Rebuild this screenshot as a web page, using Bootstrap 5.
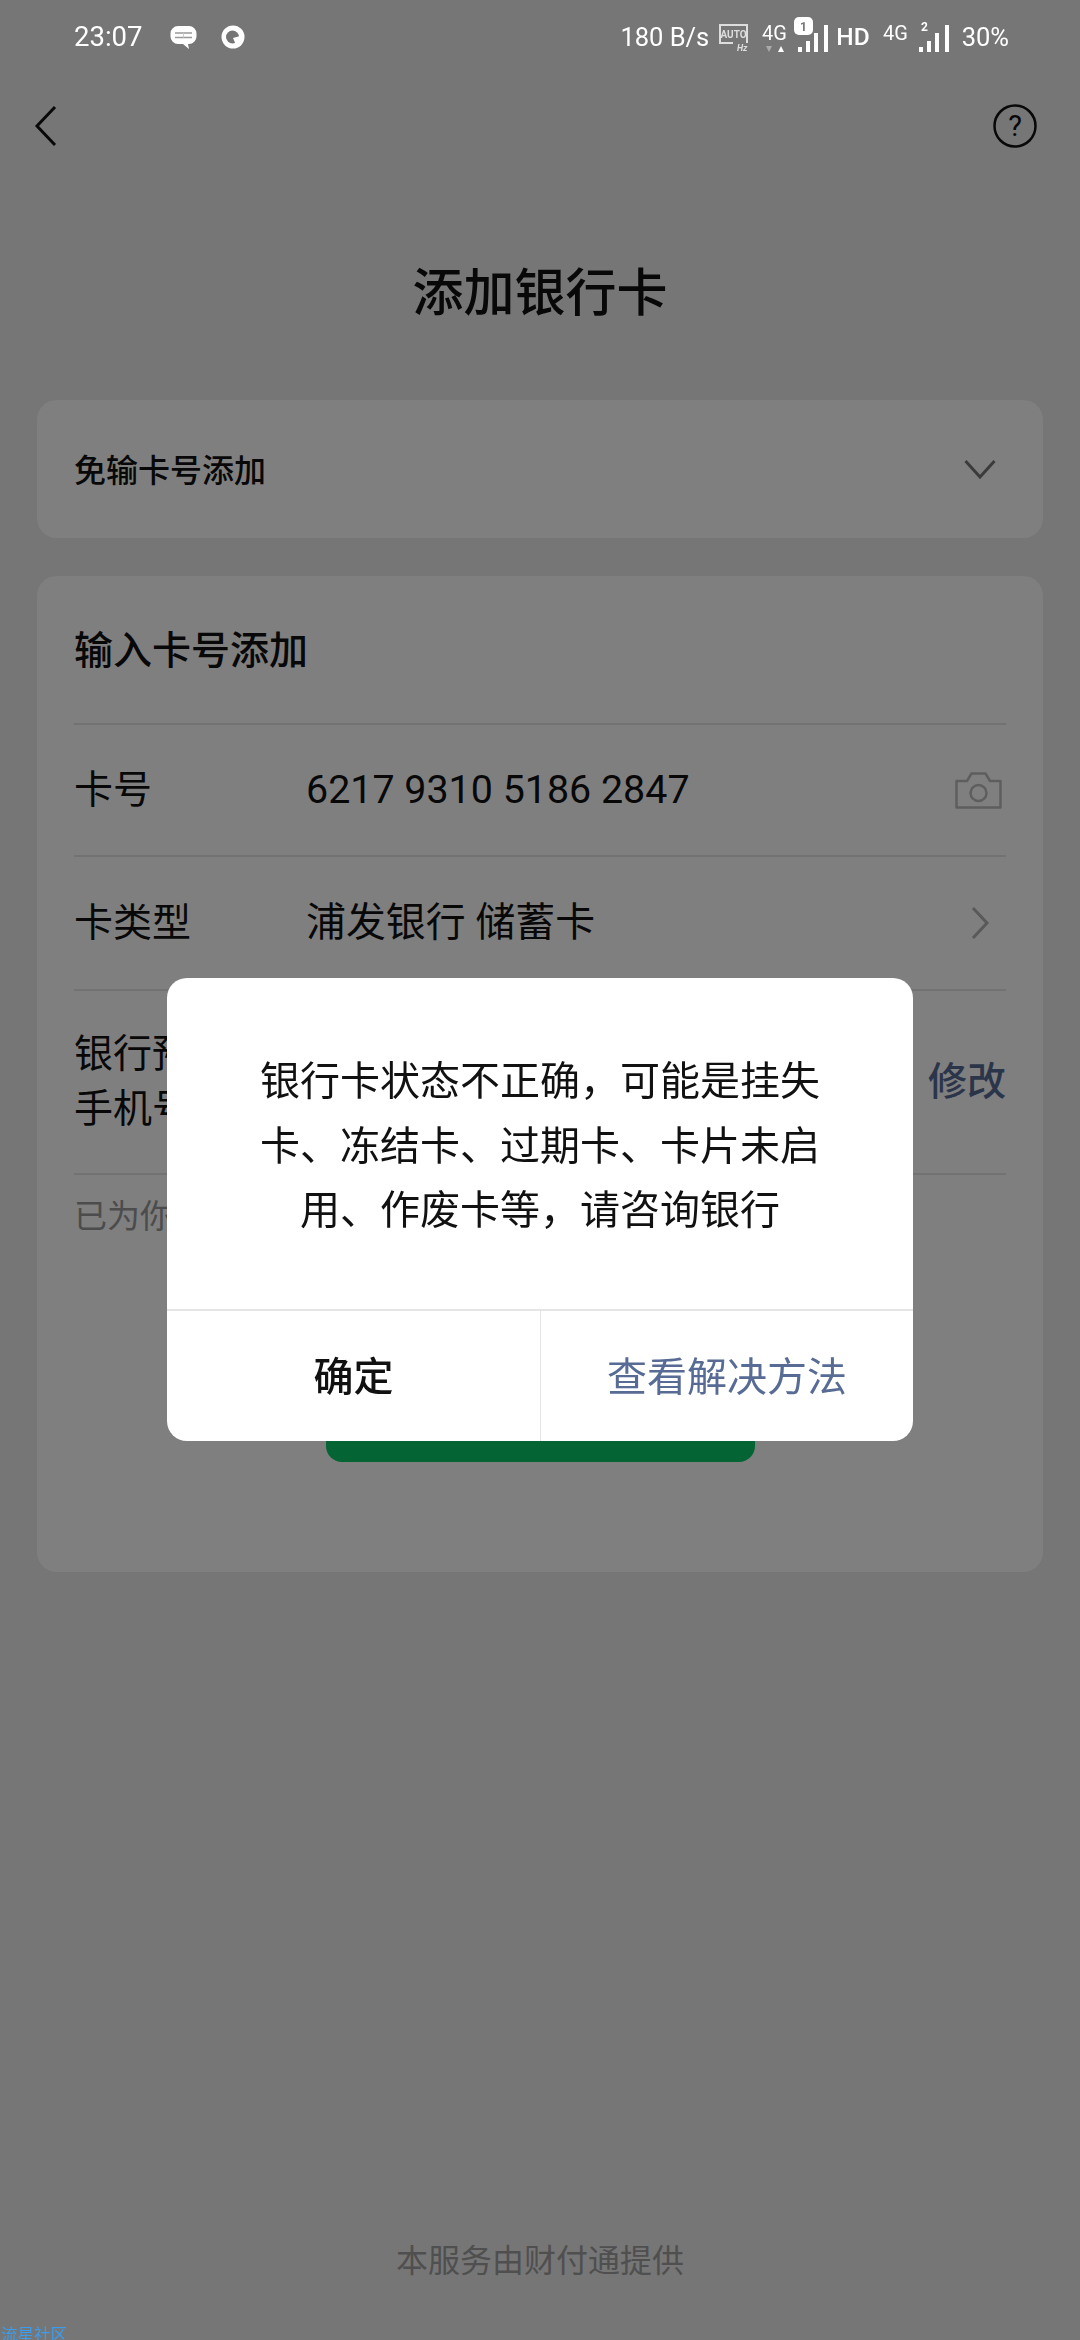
<!DOCTYPE html>
<html lang="zh-CN">

<head>
    <meta charset="UTF-8">
    <meta name="viewport" content="width=device-width, initial-scale=1.0">
    <title>添加银行卡</title>
    <link href="https://cdn.jsdelivr.net/npm/bootstrap@5.3.0/dist/css/bootstrap.min.css" rel="stylesheet">
    <style>
        html, body { height: 100%; overflow: hidden; }
        body { background: #ededed; color: #111; font-family: "Roboto", "Noto Sans CJK SC", sans-serif; }

        /* status bar sits above the dim layer */
        .status-bar { position: relative; z-index: 1060; height: 74px; padding: 0 71px 0 74px; color: #fff; font-size: 25.5px; line-height: 74px; }
        .status-time { font-size: 27.5px; }
        .status-hd { margin-left: 8px; font-size: 24.5px; font-weight: 500; }
        .status-bar svg { display: block; flex: none; }
        .sb-bubble { margin-left: 28px; }
        .sb-round { margin-left: 24px; }
        .sb-auto { margin-left: 10px; }
        .sb-sim1 { margin-left: 14px; }
        .sb-sim2 { margin-left: 13px; }
        .sb-batt { margin-left: 13px; }

        .top-nav { height: 74px; margin-top: 15px; padding: 0 43px 0 34px; }
        .page-title { margin: 91px 0 0; height: 80px; font-size: 51px; font-weight: 500; line-height: 80px; text-align: center; }

        .sheet { margin: 0 37px; background: #fff; border-radius: 20px; }
        .sheet-quick { margin-top: 66px; height: 138px; padding: 0 47px 0 37px; font-size: 32px; font-weight: 500; }
        .quick-label { padding-top: 4px; }
        .sheet-form { margin-top: 38px; height: 996px; padding: 0 37px; }
        .form-head { height: 147px; padding-top: 4px; font-size: 39px; font-weight: 500; }
        .form-line { border-top: 2px solid #e4e4e4; font-size: 39px; }
        .line-card { height: 132px; }
        .line-type { height: 134px; }
        .line-phone { height: 184px; }
        .line-label { width: 232px; flex: none; }
        .phone-label { line-height: 55px; }
        .line-value { font-size: 39.4px; }
        .type-value { font-size: 39.9px; }
        .line-link { color: #576b95; font-weight: 500; }
        .form-hint { height: 76px; padding-top: 17px; font-size: 33px; color: #999; }
        .btn-wx { display: block; width: 429px; height: 96px; margin: 117px auto 0; background: #09c967; border-radius: 16px; }

        .footer-note { margin-top: 666px; font-size: 32px; color: #9e9e9e; text-align: center; line-height: 46px; }

        .dialog-wrap { position: fixed; z-index: 1055; top: 0; left: 0; width: 100%; padding-top: 978px; }
        .wx-dialog { width: 746px; height: 463px; margin: 0 auto; background: #fff; border-radius: 20px; overflow: hidden; }
        .dialog-text { height: 331px; padding: 72px 90px 0; font-size: 40px; line-height: 64.5px; text-align: center; color: #111; }
        .dialog-actions { height: 132px; border-top: 2px solid #e5e5e5; font-size: 40px; line-height: 133px; text-align: center; }
        .dialog-actions > div { width: 50%; }
        .action-ok { font-weight: 500; color: #111; }
        .action-more { color: #576b95; border-left: 1px solid #e5e5e5; }

        .watermark { position: fixed; z-index: 1060; left: 1px; bottom: -7px; font-size: 16.5px; line-height: 23px; color: #3d9cec; }
    </style>
</head>

<body>
    <!-- 状态栏 -->
    <div class="status-bar d-flex align-items-center">
        <span class="status-time">23:07</span>
        <svg class="sb-bubble" width="27" height="25" viewBox="0 0 27 25">
            <path d="M8 1h11a7.500 7.500 0 0 1 7.500 7.500v3a7.500 7.500 0 0 1-7.500 7.500h-1l1 5-6-5H8a7.500 7.500 0 0 1-7.500-7.500v-3A7.500 7.500 0 0 1 8 1z" fill="#fff"/>
            <path d="M5 8h17M5 12.500h17" stroke="#999" stroke-width="1.500"/>
            <path d="M13.500 8v4.500" stroke="#ccc" stroke-width="1"/>
        </svg>
        <svg class="sb-round" width="24" height="24" viewBox="0 0 24 24">
            <circle cx="12" cy="12" r="11.500" fill="#fff"/>
            <circle cx="11.500" cy="12" r="6.500" fill="#757575"/>
            <path d="M12 13l7-2 1 6-5 3z" fill="#fff"/>
        </svg>
        <span class="ms-auto">180 B/s</span>
        <svg class="sb-auto" width="29" height="27" viewBox="0 0 29 27">
            <path d="M14 19H1V1h27v18" fill="none" stroke="#ddd" stroke-width="2"/>
            <text x="14.500" y="14" font-size="10" font-weight="700" fill="#ddd" text-anchor="middle" font-family="Roboto">AUTO</text>
            <text x="28.500" y="27" font-size="9" font-weight="700" font-style="italic" fill="#ddd" text-anchor="end" font-family="Roboto">Hz</text>
        </svg>
        <svg class="sb-sim1" width="66" height="40" viewBox="0 0 66 40">
            <text x="0" y="23" font-size="20" fill="#fff" font-family="Roboto">4G</text>
            <path d="M4 29h6l-3 6z" fill="#aaa"/>
            <path d="M16 35h6l-3-6z" fill="#fff"/>
            <rect x="32" y="0" width="19" height="18" rx="5" fill="#fff"/>
            <text x="41.500" y="14" font-size="12" font-weight="700" fill="#757575" text-anchor="middle" font-family="Roboto">1</text>
            <path d="M36 30h4v5h-4zM44 24h4v11h-4zM52 16h4v19h-4zM62 8h4v27h-4z" fill="#fff"/>
        </svg>
        <span class="status-hd">HD</span>
        <svg class="sb-sim2" width="66" height="40" viewBox="0 0 66 40">
            <text x="0" y="23" font-size="20" fill="#fff" font-family="Roboto">4G</text>
            <text x="38" y="14" font-size="12" font-weight="700" fill="#fff" font-family="Roboto">2</text>
            <path d="M36 30h4v5h-4zM44 24h4v11h-4zM52 16h4v19h-4zM62 8h4v27h-4z" fill="#fff"/>
        </svg>
        <span class="sb-batt">30%</span>
    </div>

    <!-- 导航 -->
    <div class="top-nav d-flex align-items-center justify-content-between">
        <svg width="24" height="42" viewBox="0 0 24 42">
            <path d="M21 2 3 21l18 19" fill="none" stroke="#111" stroke-width="3"/>
        </svg>
        <svg width="44" height="44" viewBox="0 0 44 44">
            <circle cx="22" cy="22" r="20.500" fill="none" stroke="#111" stroke-width="2.500"/>
            <text x="22" y="32" font-size="29" fill="#111" text-anchor="middle" font-family="Roboto">?</text>
        </svg>
    </div>

    <h1 class="page-title">添加银行卡</h1>

    <div class="sheet sheet-quick d-flex align-items-center justify-content-between">
        <span class="quick-label">免输卡号添加</span>
        <svg width="32" height="20" viewBox="0 0 32 20">
            <path d="M1.500 2l14.500 16L30.500 2" fill="none" stroke="#777" stroke-width="3"/>
        </svg>
    </div>

    <div class="sheet sheet-form">
        <div class="form-head d-flex align-items-center">输入卡号添加</div>
        <div class="form-line line-card d-flex align-items-center">
            <span class="line-label">卡号</span>
            <span class="line-value flex-grow-1">6217 9310 5186 2847</span>
            <svg class="me-1" width="47" height="37" viewBox="0 0 47 37">
                <path d="M1.500 9H12l4.500-7.500h14L35 9h10.500v26.500h-44z" fill="none" stroke="#bcbcbc" stroke-width="2.500" stroke-linejoin="round"/>
                <circle cx="23.500" cy="21" r="8" fill="none" stroke="#bcbcbc" stroke-width="2.500"/>
            </svg>
        </div>
        <div class="form-line line-type d-flex align-items-center">
            <span class="line-label">卡类型</span>
            <span class="type-value flex-grow-1">浦发银行 储蓄卡</span>
            <svg class="me-3" width="20" height="34" viewBox="0 0 20 34">
                <path d="M3 2l14 15L3 32" fill="none" stroke="#b2b2b2" stroke-width="3"/>
            </svg>
        </div>
        <div class="form-line line-phone d-flex align-items-center justify-content-between">
            <span class="line-label phone-label">银行预留<br>手机号</span>
            <span class="line-link">修改</span>
        </div>
        <div class="form-line form-hint">已为你</div>
        <button type="button" class="btn btn-wx"></button>
    </div>

    <div class="footer-note">本服务由财付通提供</div>

    <!-- 弹窗 -->
    <div class="modal-backdrop show"></div>
    <div class="dialog-wrap">
        <div class="wx-dialog">
            <div class="dialog-text">银行卡状态不正确，可能是挂失卡、冻结卡、过期卡、卡片未启用、作废卡等，请咨询银行</div>
            <div class="dialog-actions d-flex">
                <div class="action-ok">确定</div>
                <div class="action-more">查看解决方法</div>
            </div>
        </div>
    </div>

    <div class="watermark">流星社区</div>

    <script src="https://cdn.jsdelivr.net/npm/bootstrap@5.3.0/dist/js/bootstrap.bundle.min.js"></script>
</body>

</html>
